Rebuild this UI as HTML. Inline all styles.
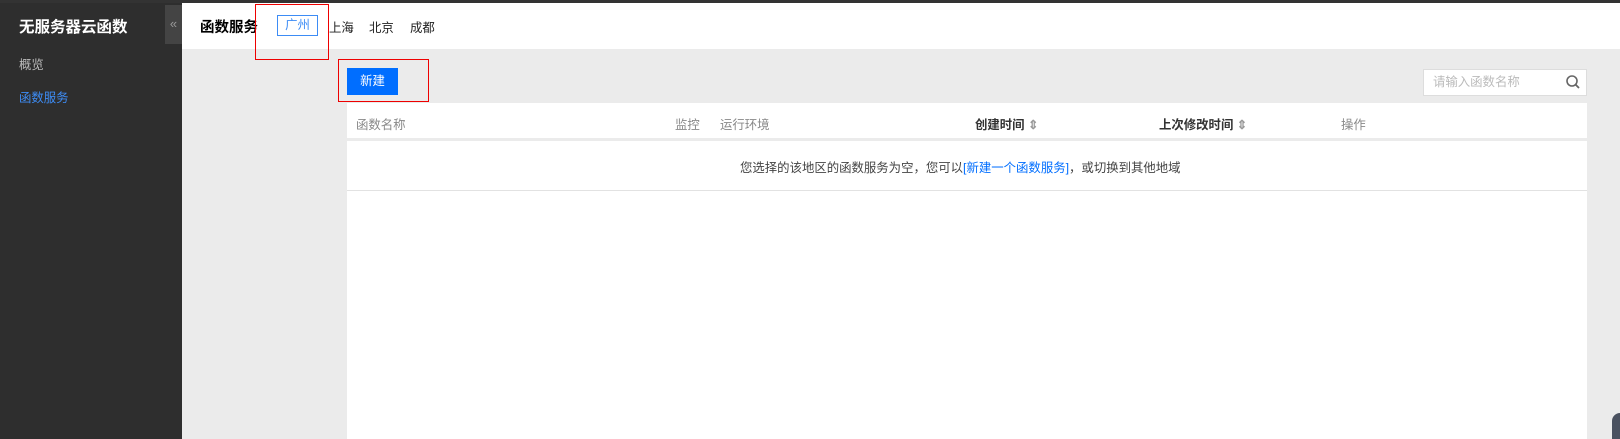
<!DOCTYPE html>
<html><head><meta charset="utf-8"><style>
*{margin:0;padding:0;box-sizing:border-box}
html,body{width:1620px;height:439px;overflow:hidden}
body{background:#ebebeb;font-family:"Liberation Sans","Noto Sans CJK SC",sans-serif;font-size:12.4px}
#w{position:relative;width:1620px;height:439px;overflow:hidden}
.abs{position:absolute;white-space:nowrap}
</style></head><body><div id="w">
<div class="abs" style="left:0;top:0;width:1620px;height:3px;background:#333"></div>
<div class="abs" style="left:0;top:3px;width:182px;height:436px;background:#2e2e2e"></div>
<div class="abs" style="left:19px;top:15px;color:#fff;font-size:15.5px;font-weight:bold">无服务器云函数</div>
<div class="abs" style="left:19px;top:55px;color:#bbb">概览</div>
<div class="abs" style="left:19px;top:88px;color:#3d8cf5">函数服务</div>
<div class="abs" style="left:165px;top:5px;width:17px;height:39px;background:#444;color:#999;font-size:13px;text-align:center;line-height:37px">«</div>
<div class="abs" style="left:182px;top:3px;width:1438px;height:46px;background:#fff"></div>
<div class="abs" style="left:200px;top:16px;font-size:14.5px;font-weight:bold;color:#000">函数服务</div>
<div class="abs" style="left:277px;top:15px;width:41px;height:21px;border:1px solid #3d8cf5;color:#3d8cf5;text-align:center;line-height:19px">广州</div>
<div class="abs" style="left:329px;top:18px;color:#222">上海</div>
<div class="abs" style="left:369px;top:18px;color:#222">北京</div>
<div class="abs" style="left:410px;top:18px;color:#222">成都</div>
<div class="abs" style="left:255px;top:4px;width:74px;height:56px;border:1px solid #e00"></div>
<div class="abs" style="left:347px;top:68px;width:51px;height:27px;background:#006eff;color:#fff;text-align:center;line-height:27px">新建</div>
<div class="abs" style="left:338px;top:59px;width:91px;height:43px;border:1px solid #e00"></div>
<div class="abs" style="left:1423px;top:69px;width:164px;height:27px;background:#fff;border:1px solid #ddd;color:#bbb;padding-left:9px;line-height:25px">请输入函数名称</div>
<svg class="abs" style="left:1565px;top:74px" width="16" height="16" viewBox="0 0 16 16"><circle cx="7" cy="7" r="5" fill="none" stroke="#666" stroke-width="1.6"/><line x1="10.5" y1="10.5" x2="14" y2="14" stroke="#666" stroke-width="1.8"/></svg>
<div class="abs" style="left:347px;top:103px;width:1240px;height:336px;background:#fff"></div>
<div class="abs" style="left:347px;top:138px;width:1240px;height:3px;background:#ebebeb"></div>
<div class="abs" style="left:347px;top:190px;width:1240px;height:1px;background:#e2e2e2"></div>
<div class="abs" style="left:356px;top:115px;color:#888">函数名称</div>
<div class="abs" style="left:675px;top:115px;color:#888">监控</div>
<div class="abs" style="left:720px;top:115px;color:#888">运行环境</div>
<div class="abs" style="left:975px;top:115px;color:#333;font-weight:bold">创建时间 <span style="color:#999">⇕</span></div>
<div class="abs" style="left:1159px;top:115px;color:#333;font-weight:bold">上次修改时间 <span style="color:#999">⇕</span></div>
<div class="abs" style="left:1341px;top:115px;color:#888">操作</div>
<div class="abs" style="left:740px;top:158px;color:#444">您选择的该地区的函数服务为空，您可以<span style="color:#006eff">[新建一个函数服务]</span>，或切换到其他地域</div>
<div class="abs" style="left:1612px;top:413px;width:8px;height:26px;border-radius:20px 0 0 0;background:#4a5160"></div>
</div></body></html>
